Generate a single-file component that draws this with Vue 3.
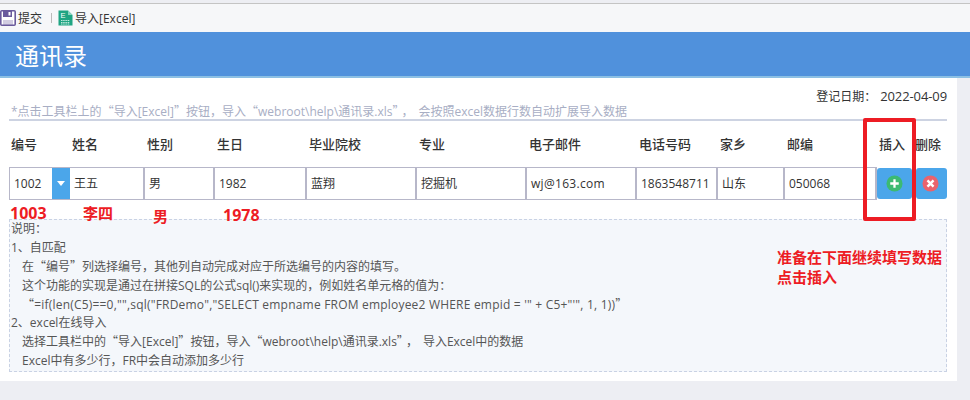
<script setup>
const headers = ['编号','姓名','性别','生日','毕业院校','专业','电子邮件','电话号码','家乡','邮编'];
const cells = ['王五','男','1982','蓝翔','挖掘机','wj@163.com','1863548711','山东','050068'];
</script>

<template>
  <div class="page">
    <div class="toolbar">
      <svg class="ico" width="16" height="16" viewBox="0 0 16 16"><rect x="0.8" y="0.8" width="14.4" height="14.4" rx="1" fill="#fff" stroke="#6a5a9c" stroke-width="1.6"/><rect x="3" y="1" width="9" height="6" fill="#6a5a9c"/><rect x="8.5" y="2" width="2" height="3.5" fill="#fff"/><rect x="3" y="10" width="10" height="5" fill="#6a5a9c" opacity=".3"/></svg>
      <span class="tool-label">提交</span>
      <span class="sep"></span>
      <svg class="ico" width="15" height="16" viewBox="0 0 15 16"><path d="M0.5 0.5H10L14.5 5V15.5H0.5Z" fill="#1fa583"/><path d="M10 .5L14.5 5H10Z" fill="#8ad3c0"/><text x="2.5" y="8" font-size="7.5" fill="#fff" font-family="Liberation Sans">E</text><path d="M3 10.5H12M3 12.5H12M3 14H12" stroke="#bfe8dd" stroke-width="1" stroke-dasharray="1.5 .7"/></svg>
      <span class="tool-label">导入[Excel]</span>
    </div>
    <div class="title">通讯录</div>
    <main class="panel">
      <div class="date">登记日期：<span class="dv">2022-04-09</span></div>
      <div class="hint">*点击工具栏上的<span class="q">“</span>导入[Excel]<span class="q">”</span>按钮，导入<span class="q">“</span>webroot\help\通讯录.xls<span class="q">”</span><span class="comma">，</span>会按照excel数据行数自动扩展导入数据</div>
      <div class="grid heads">
        <div v-for="h in headers" :key="h">{{ h }}</div>
        <div>插入</div>
        <div class="del">删除</div>
      </div>
      <div class="grid row">
        <div class="cell first"><span>1002</span><i class="drop"></i></div>
        <div v-for="c in cells" :key="c" class="cell" :class="{ mail: c.includes('@') }">{{ c }}</div>
        <button class="btn"><svg width="17" height="17" viewBox="0 0 18 18"><circle cx="9" cy="9" r="8.5" fill="#3cba72"/><path d="M9 4.5v9M4.5 9h9" stroke="#fff" stroke-width="2.4"/></svg></button>
        <button class="btn second"><svg width="17" height="17" viewBox="0 0 18 18"><circle cx="9" cy="9" r="8.5" fill="#ea636d"/><path d="M5.8 5.8l6.4 6.4M12.2 5.8l-6.4 6.4" stroke="#fff" stroke-width="2.6"/></svg></button>
      </div>
      <div class="notes">
        <p>说明：</p>
        <p>1、自匹配</p>
        <p class="in">在<span class="q">“</span>编号<span class="q">”</span>列选择编号，其他列自动完成对应于所选编号的内容的填写。</p>
        <p class="in">这个功能的实现是通过在拼接SQL的公式sql()来实现的，例如姓名单元格的值为：</p>
        <p class="in formula"><span class="q">“</span>=if(len(C5)==0,"",sql("FRDemo","SELECT empname FROM employee2 WHERE empid = '" + C5+"'", 1, 1))<span class="q">”</span></p>
        <p>2、excel在线导入</p>
        <p class="in">选择工具栏中的<span class="q">“</span>导入[Excel]<span class="q">”</span>按钮，导入<span class="q">“</span>webroot\help\通讯录.xls<span class="q">”</span><span class="comma">，</span>导入Excel中的数据</p>
        <p class="in">Excel中有多少行，FR中会自动添加多少行</p>
      </div>
      <span class="red r1">1003</span>
      <span class="red r2">李四</span>
      <span class="red r3">男</span>
      <span class="red r4">1978</span>
      <div class="red r5">准备在下面继续填写数据<br>点击插入</div>
      <div class="redbox"></div>
    </main>
  </div>
</template>

<style>
html, body { margin: 0; background: #edeef3; }
</style>

<style scoped>
.page {
  width: 970px; height: 400px; overflow: hidden; background: #edeef3; position: relative;
  font-family: "Open Sans", "Noto Sans CJK SC", sans-serif; font-size: 12px; color: #333;
}
.q { font-family: "Noto Sans CJK SC", sans-serif; line-height: 0; }
.comma { margin: 0 5px 0 3px; }
.toolbar {
  margin-top: 3px; border-top: 1px solid #c4c4c4; background: #f6f7f9;
  display: flex; align-items: center; box-sizing: border-box; height: 29px;
}
.ico { flex: none; }
.tool-label { margin-left: 2px; color: #333; }
.sep { width: 1px; height: 10px; background: #bbb; margin: 0 6px 0 9px; }
.title {
  height: 44px; line-height: 48px; background: #5091dc; border-bottom: 2px solid #8cc0e4;
  color: #fff; font-size: 24px; padding-left: 15px;
}
.panel {
  position: relative; width: 957px; height: 303px; background: #fff; box-sizing: border-box; padding: 0 10px 0 9px;
}
.date { text-align: right; height: 16px; line-height: 16px; padding-top: 10px; color: #333; }
.dv { font-size: 13px; margin-left: 4px; letter-spacing: -.1px; }
.hint {
  height: 15px; line-height: 15px; border-bottom: 2px solid #cdd3e2;
  color: #a8aec4; padding-left: 2px; white-space: nowrap;
}
.grid {
  display: grid;
  grid-template-columns: 61px 75px 70px 92px 110px 110px 110px 81px 67px 92px 35px 35px;
}
.heads { margin-top: 13px; height: 20px; line-height: 20px; font-size: 13px; font-weight: 500; color: #333; padding-left: 2px; margin-right: -2px; }
.del { padding-left: 1px; }
.row { margin-top: 13px; height: 33px; }
.cell {
  border: 1px solid #b7b7c9; border-left-width: 0; border-right-width: 2px; box-sizing: border-box; padding-left: 4px;
  line-height: 31px; font-size: 12px; white-space: nowrap; overflow: hidden;
}
.mail { letter-spacing: .3px; }
.first { display: flex; border-left-width: 1px; justify-content: space-between; padding-right: 0; border-right-width: 0; }
.drop { width: 18px; background: #4ba6ea; position: relative; display: block; }
.drop::after {
  content: ""; position: absolute; left: 5px; top: 13px;
  border-left: 4px solid transparent; border-right: 4px solid transparent; border-top: 5px solid #fff;
}
.btn {
  border: 0; padding: 0; height: 31px; margin: 1px 0 0; background: #4ba6ea; border-radius: 3px;
  display: flex; align-items: center; justify-content: center;
}
.second { margin-left: 4px; border-radius: 3px; width: 31px; padding-right: 3px; }
.notes {
  margin-top: 19px; height: 153px; box-sizing: border-box; border: 1px dashed #c9d2e4; background: #f4f7fb;
  padding: 0 1px; color: #555;
}
.notes p { margin: 0; white-space: nowrap; height: 18.9px; line-height: 18.9px; }
.notes .in { padding-left: 11px; }
.formula { letter-spacing: .2px; }
.red { position: absolute; color: #ed1c24; font-weight: 700; font-size: 15px; line-height: 14px; }
.r1 { left: 10px; top: 128px; font-size: 16px; }
.r2 { left: 83px; top: 128px; }
.r3 { left: 153px; top: 131px; }
.r4 { left: 223px; top: 130px; font-size: 16px; }
.r5 { left: 777px; top: 169px; line-height: 20px; }
.redbox { position: absolute; left: 863px; top: 40px; width: 53px; height: 103px; border: 4px solid #ed1c24; border-radius: 2px; box-sizing: border-box; }
</style>
